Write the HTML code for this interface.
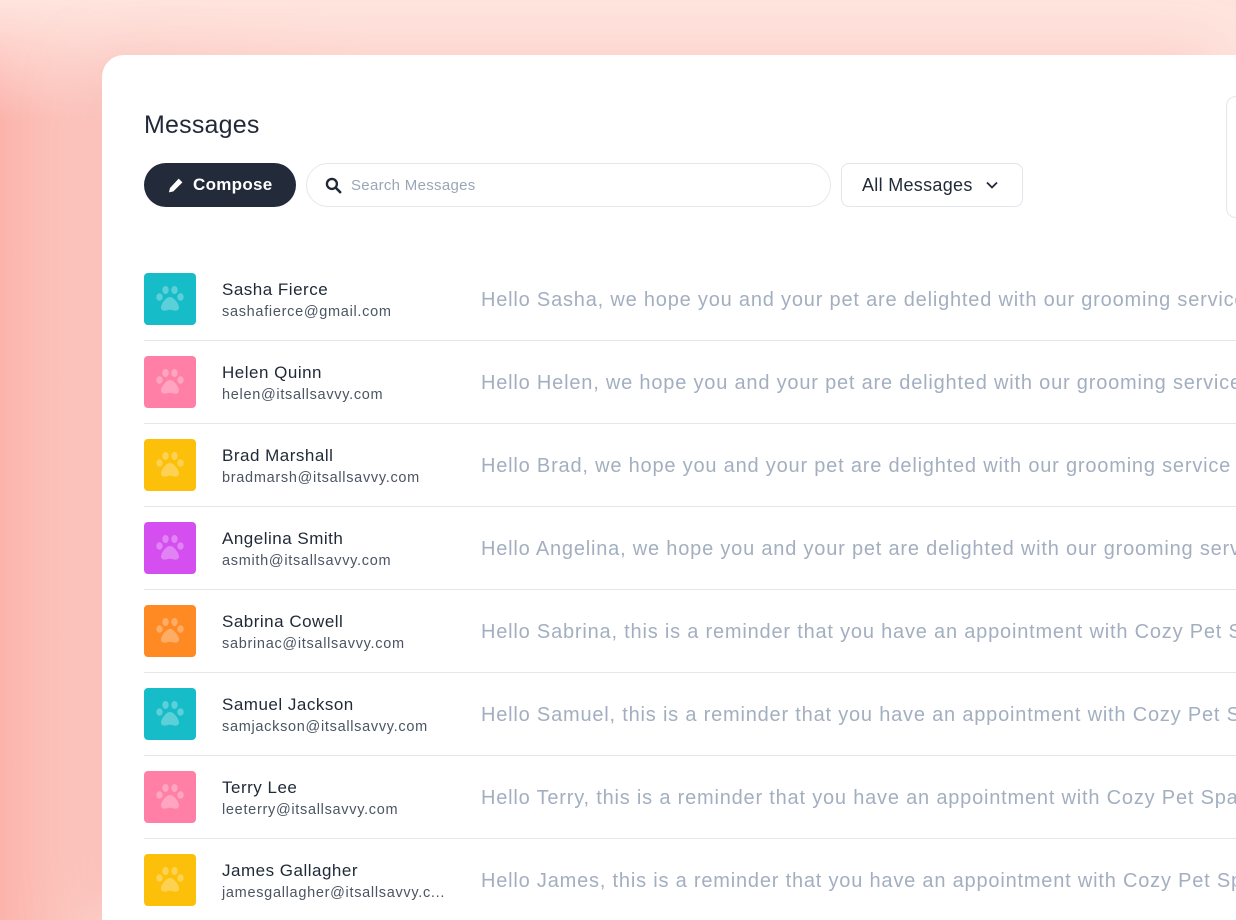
<!DOCTYPE html>
<html><head><style>
*{box-sizing:border-box;margin:0;padding:0}
html{width:1236px;height:920px;overflow:hidden}
body{width:1236px;height:920px;overflow:hidden;font-family:"Liberation Sans",sans-serif;
background:linear-gradient(90deg,#fbb3ab 0%,#fdd3cc 8%,#ffe6e0 30%,#ffe6e0 100%);position:relative}
.bgtop{position:absolute;left:0;top:0;width:1236px;height:920px;background:linear-gradient(180deg,#ffe4de 0,rgba(255,228,222,0) 120px)}
.card{position:absolute;left:102px;top:55px;width:1134px;height:865px;background:#fff;border-radius:22px 0 0 0;box-shadow:-20px 0 60px rgba(240,120,110,.25);overflow:hidden}
h1{position:absolute;left:42px;top:56px;font-size:25px;font-weight:400;color:#1f2937;letter-spacing:.2px}
.compose{position:absolute;left:42px;top:108px;width:152px;height:44px;border-radius:22px;background:#232b3a;color:#fff;font-weight:700;font-size:17px;display:flex;align-items:center;padding-left:23px;gap:9px;letter-spacing:.3px}
.search{position:absolute;left:204px;top:108px;width:525px;height:44px;border:1px solid #e5e7eb;border-radius:22px;display:flex;align-items:center;padding-left:18px;gap:9px;color:#9aa6b8;font-size:15px;letter-spacing:.3px}
.sel{position:absolute;left:739px;top:108px;width:182px;height:44px;border:1px solid #e2e5ea;border-radius:8px;display:flex;align-items:center;padding-left:20px;gap:12px;font-size:18px;color:#1f2937;letter-spacing:.3px}
.rbox{position:absolute;left:1124px;top:41px;width:100px;height:122px;border:1px solid #e5e7eb;border-radius:10px}
.row{position:absolute;left:42px;width:1200px;height:68px;border-bottom:1px solid #e3e6ec}
.av{position:absolute;left:0;top:0;width:52px;height:52px;border-radius:4px;display:flex;align-items:center;justify-content:center}
.nm{position:absolute;left:78px;top:7px;font-size:17px;color:#1f2937;letter-spacing:.5px}
.em{position:absolute;left:78px;top:31px;font-size:14.5px;color:#4b5563;white-space:nowrap;letter-spacing:.7px}
.pv{position:absolute;left:337px;top:16px;font-size:20px;color:#a3afc0;white-space:nowrap;letter-spacing:.8px}
</style></head><body><div class="bgtop"></div>
<div class="card">
<h1>Messages</h1>
<div class="compose"><svg width="17" height="17" viewBox="0 0 16 16"><path d="M11 1.5l3.5 3.5-8.5 8.5-4.2 1 1-4.2z" fill="#fff"/></svg>Compose</div>
<div class="search"><svg width="17" height="17" viewBox="0 0 16 16"><circle cx="6.5" cy="6.5" r="4.7" fill="none" stroke="#1f2937" stroke-width="2.2"/><path d="M10 10l4.3 4.3" stroke="#1f2937" stroke-width="2.4" stroke-linecap="round"/></svg>Search Messages</div>
<div class="sel">All Messages <svg width="14" height="10" viewBox="0 0 14 10"><path d="M2 2.5l5 5 5-5" fill="none" stroke="#1f2937" stroke-width="1.8"/></svg></div>
<div class="rbox"></div>
<div id="rows"></div>
</div>
<script>
const d=[["#16bcc8","Sasha Fierce","sashafierce@gmail.com","Hello Sasha, we hope you and your pet are delighted with our grooming service today"],
["#ff7fa6","Helen Quinn","helen@itsallsavvy.com","Hello Helen, we hope you and your pet are delighted with our grooming service today"],
["#fcbf0a","Brad Marshall","bradmarsh@itsallsavvy.com","Hello Brad, we hope you and your pet are delighted with our grooming service today"],
["#d44ef0","Angelina Smith","asmith@itsallsavvy.com","Hello Angelina, we hope you and your pet are delighted with our grooming service"],
["#ff8a24","Sabrina Cowell","sabrinac@itsallsavvy.com","Hello Sabrina, this is a reminder that you have an appointment with Cozy Pet Spa"],
["#16bcc8","Samuel Jackson","samjackson@itsallsavvy.com","Hello Samuel, this is a reminder that you have an appointment with Cozy Pet Spa"],
["#ff7fa6","Terry Lee","leeterry@itsallsavvy.com","Hello Terry, this is a reminder that you have an appointment with Cozy Pet Spa"],
["#fcbf0a","James Gallagher","jamesgallagher@itsallsavvy.c...","Hello James, this is a reminder that you have an appointment with Cozy Pet Spa"]];
let h="";d.forEach((r,i)=>{h+=`<div class="row" style="top:${218+i*83}px"><div class="av" style="background:${r[0]}"><svg width="30" height="28" viewBox="0 0 30 28" fill="rgba(255,255,255,.3)"><ellipse cx="4.5" cy="12" rx="3.2" ry="3.8"/><ellipse cx="10.5" cy="5" rx="3.2" ry="4"/><ellipse cx="19.5" cy="5" rx="3.2" ry="4"/><ellipse cx="25.5" cy="12" rx="3.2" ry="3.8"/><path d="M15 12c-4 0-9 7-9 10.5 0 3 3 3.5 5 3 2-.5 2.6-.8 4-.8s2 .3 4 .8 5 0 5-3C24 19 19 12 15 12z"/></svg></div><div class="nm">${r[1]}</div><div class="em">${r[2]}</div><div class="pv">${r[3]}</div></div>`});
document.getElementById("rows").innerHTML=h;
</script>
</body></html>
